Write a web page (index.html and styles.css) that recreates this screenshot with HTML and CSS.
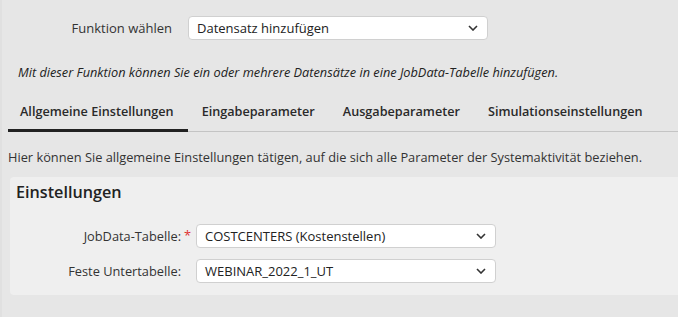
FILE: index.html
```html
<!DOCTYPE html>
<html>
<head>
    <title>Datensatz hinzufügen</title>
    <link rel="stylesheet" href="styles.css">
</head>
<body>
    <div class="page">
        <div class="function-row">
            <label class="function-label">Funktion wählen</label>
            <div class="select function-select">
                <span>Datensatz hinzufügen</span>
                <svg class="chevron" width="10" height="6" viewBox="0 0 10 6"><path d="M1 1l4 4 4-4" fill="none" stroke="#333" stroke-width="1.6"/></svg>
            </div>
        </div>

        <p class="hint">Mit dieser Funktion können Sie ein oder mehrere Datensätze in eine JobData-Tabelle hinzufügen.</p>

        <ul class="tabs">
            <li class="tab active">Allgemeine Einstellungen</li>
            <li class="tab">Eingabeparameter</li>
            <li class="tab">Ausgabeparameter</li>
            <li class="tab">Simulationseinstellungen</li>
        </ul>

        <p class="description">Hier können Sie allgemeine Einstellungen tätigen, auf die sich alle Parameter der Systemaktivität beziehen.</p>

        <div class="panel">
            <h2>Einstellungen</h2>
            <div class="form">
                <label class="field-label">JobData-Tabelle:<span class="required">*</span></label>
                <div class="select">
                    <span>COSTCENTERS (Kostenstellen)</span>
                    <svg class="chevron" width="10" height="6" viewBox="0 0 10 6"><path d="M1 1l4 4 4-4" fill="none" stroke="#333" stroke-width="1.6"/></svg>
                </div>
                <label class="field-label">Feste Untertabelle:</label>
                <div class="select">
                    <span>WEBINAR_2022_1_UT</span>
                    <svg class="chevron" width="10" height="6" viewBox="0 0 10 6"><path d="M1 1l4 4 4-4" fill="none" stroke="#333" stroke-width="1.6"/></svg>
                </div>
            </div>
        </div>
    </div>
</body>
</html>
```

FILE: styles.css
```css
html, body {
    margin: 0;
    height: 100%;
    background-color: #e6e6e6;
    font-family: "Open Sans", "Liberation Sans", sans-serif;
    font-size: 12.8px;
    color: #333;
}

.page {
    padding: 16px 0 0 8px;
    border-left: 2px solid #e0e0e0;
    box-sizing: border-box;
    height: 100%;
}

.function-row {
    display: flex;
    align-items: center;
}

.function-label {
    width: 178px;
    text-align: right;
    padding-right: 16px;
    box-sizing: border-box;
    font-size: 13px;
}

.select {
    display: flex;
    align-items: center;
    justify-content: space-between;
    width: 300px;
    height: 24px;
    box-sizing: border-box;
    padding: 0 9px 0 8px;
    background-color: #fff;
    border: 1px solid #d0d0d0;
    border-radius: 4px;
    color: #222;
    font-size: 13px;
}

.chevron {
    flex: none;
}

.hint {
    margin: 23px 0 0 8px;
    font-style: italic;
    font-size: 12.75px;
    color: #222;
}

.tabs {
    list-style: none;
    margin: 13px 0 0 -2px;
    padding: 0;
    display: flex;
    border-bottom: 1px solid #c4c4c4;
}

.tab {
    flex: none;
    white-space: nowrap;
    padding: 8px 14px 9px 14px;
    font-size: 12.65px;
    font-weight: 600;
    color: #2a2a2a;
    margin-bottom: -1px;
    border-bottom: 3px solid transparent;
}

.tab.active {
    border-bottom-color: #222;
    padding-left: 12px;
}

.description {
    margin: 16px 0 0 -2px;
}

.panel {
    margin: 11px 0 0 0;
    padding: 4px 6px 12px 6px;
    background-color: #efefef;
    border-radius: 4px 0 0 4px;
}

.panel h2 {
    margin: 0;
    font-size: 16.2px;
    font-weight: 600;
    color: #222;
}

.form {
    margin-top: 21px;
    display: grid;
    grid-template-columns: 165px 300px;
    column-gap: 15px;
    row-gap: 11px;
    align-items: center;
}

.field-label {
    text-align: right;
    position: relative;
}

.required {
    position: absolute;
    right: -10px;
    top: -1px;
    color: #e03030;
}
```
